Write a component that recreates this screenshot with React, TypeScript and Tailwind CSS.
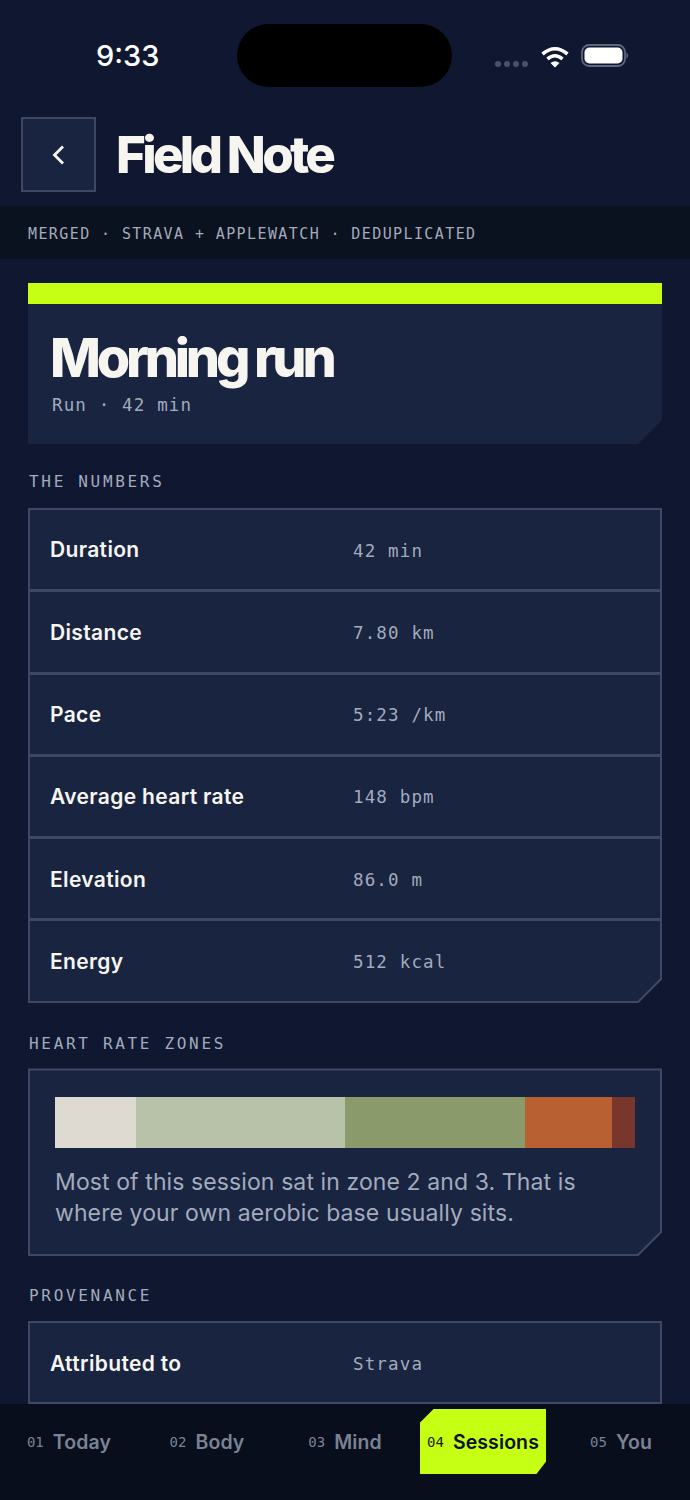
import React from 'react';

const mono = "font-['DejaVu_Sans_Mono',monospace]";
const sans = "font-['Inter',sans-serif]";

const numbers = [
  { label: 'Duration', value: '42 min' },
  { label: 'Distance', value: '7.80 km' },
  { label: 'Pace', value: '5:23 /km' },
  { label: 'Average heart rate', value: '148 bpm' },
  { label: 'Elevation', value: '86.0 m' },
  { label: 'Energy', value: '512 kcal' },
];

const tabs = [
  { num: '01', label: 'Today' },
  { num: '02', label: 'Body' },
  { num: '03', label: 'Mind' },
  { num: '04', label: 'Sessions', active: true },
  { num: '05', label: 'You' },
];

const SectionLabel: React.FC<{ children: React.ReactNode }> = ({ children }) => (
  <h2 className={`${mono} text-[16px] leading-[20px] tracking-[2.68px] pl-px text-[#a3abbd]`}>{children}</h2>
);

const Row: React.FC<{ label: string; value: string; last?: boolean }> = ({ label, value, last }) => (
  <div className={`flex items-center pl-[20px] ${last ? 'h-[79px]' : 'h-[82.3px] border-b-[3px] border-[#3e4864]'}`}>
    <div className="w-[303px] pt-[1px] text-[21px] font-semibold tracking-[0.35px] text-[#f7f5f0]">{label}</div>
    <div className={`${mono} pt-[2px] text-[17.5px] tracking-[1.15px] text-[#a3abbd]`}>{value}</div>
  </div>
);

const StatusBar: React.FC = () => (
  <div className="flex items-start h-[100px] pt-[24px] pl-[96px]">
    <div className="w-[141px] pt-[12px] text-[29px] leading-[40px] font-medium text-white">9:33</div>
    <div className="w-[215px] h-[63px] rounded-full bg-black" />
    <div className="flex items-start pl-[43px] pt-[19px]">
      <div className="flex gap-[3px] pt-[18px]">
        {[0, 1, 2, 3].map((dot) => (
          <span key={dot} className="w-[6px] h-[6px] rounded-full bg-[#4a5268]" />
        ))}
      </div>
      <svg width="30" height="22" viewBox="0 0 30 22" className="ml-[12px] mt-[3px]">
        <path d="M2.5 8 Q15 -2.5 27.5 8" fill="none" stroke="#fff" strokeWidth="3.6" />
        <path d="M7.5 13 Q15 6.5 22.5 13" fill="none" stroke="#fff" strokeWidth="3.6" />
        <path d="M10.5 17 Q15 13.5 19.5 17 L15 21.5 Z" fill="#fff" />
      </svg>
      <svg width="48" height="24" viewBox="0 0 48 24" className="ml-[11px] mt-[1px]">
        <rect x="1" y="1" width="43" height="21" rx="7" fill="none" stroke="#5f677e" strokeWidth="1.8" />
        <rect x="3.5" y="3.5" width="38" height="16" rx="5" fill="#fff" />
        <path d="M45.5 8 Q48.5 11.5 45.5 15 Z" fill="#6a7288" />
      </svg>
    </div>
  </div>
);

export default function App() {
  return (
    <div className={`${sans} relative w-[690px] h-[1500px] overflow-hidden bg-[#0f1830]`}>
      <StatusBar />

      <header className="flex items-center gap-[20px] h-[106px] pl-[21px] pt-[3px]">
        <button className="flex items-center justify-center w-[75px] h-[75px] border-2 border-[#3e4864] bg-[#182440]">
          <svg width="16" height="22" viewBox="0 0 16 22" fill="none" stroke="#f7f5f0" strokeWidth="2.8">
            <path d="M12 2.5 L3.5 11 L12 19.5" />
          </svg>
        </button>
        <h1 className="text-[51px] leading-[56px] font-extrabold tracking-[-3.7px] text-[#f7f5f0]">Field Note</h1>
      </header>

      <div className={`${mono} h-[53px] flex items-center pl-[28px] pt-[3px] bg-[#0a111f] text-[15px] tracking-[1.4px] text-[#a3abbd]`}>
        MERGED · STRAVA + APPLEWATCH · DEDUPLICATED
      </div>

      <main className="px-[28px] pt-[24px]">
        <section className="bg-[#182440] border-t-[21px] border-[#c6ff14] h-[161px] pl-[22px] pt-[24px] [clip-path:polygon(0_0,100%_0,100%_calc(100%-24px),calc(100%-24px)_100%,0_100%)]">
          <div className="text-[54px] leading-[60px] font-extrabold tracking-[-4.2px] text-[#f7f5f0]">Morning run</div>
          <div className={`${mono} text-[17.5px] leading-[26px] mt-[4px] pl-[2px] tracking-[1.15px] text-[#a3abbd]`}>Run · 42 min</div>
        </section>

        <div className="mt-[28px] mb-[16px]">
          <SectionLabel>THE NUMBERS</SectionLabel>
        </div>
        <div className="bg-[#3e4864] p-[2px] [clip-path:polygon(0_0,100%_0,100%_calc(100%-24px),calc(100%-24px)_100%,0_100%)]">
          <div className="bg-[#182440] pb-[1px] [clip-path:polygon(0_0,100%_0,100%_calc(100%-23px),calc(100%-23px)_100%,0_100%)]">
            {numbers.map((row, index) => (
              <Row key={row.label} label={row.label} value={row.value} last={index === numbers.length - 1} />
            ))}
          </div>
        </div>

        <div className="mt-[31px] mb-[14px]">
          <SectionLabel>HEART RATE ZONES</SectionLabel>
        </div>
        <div className="bg-[#3e4864] p-[2px] [clip-path:polygon(0_0,100%_0,100%_calc(100%-24px),calc(100%-24px)_100%,0_100%)]">
          <div className="bg-[#182440] h-[184px] pl-[25px] pr-[25px] pt-[27px] [clip-path:polygon(0_0,100%_0,100%_calc(100%-23px),calc(100%-23px)_100%,0_100%)]">
            <div className="flex h-[51px]">
              <div className="w-[81px] bg-[#dedad2]" />
              <div className="w-[209px] bg-[#b8c2a8]" />
              <div className="w-[180px] bg-[#8a9a6a]" />
              <div className="w-[87px] bg-[#b86032]" />
              <div className="w-[23px] bg-[#78362c]" />
            </div>
            <p className="mt-[19px] text-[23px] leading-[31px] tracking-[0.1px] text-[#a3abbd]">
              Most of this session sat in zone 2 and 3. That is where your own aerobic base usually sits.
            </p>
          </div>
        </div>

        <div className="mt-[30px] mb-[15px]">
          <SectionLabel>PROVENANCE</SectionLabel>
        </div>
        <div className="bg-[#3e4864] p-[2px]">
          <div className="bg-[#182440]">
            <Row label="Attributed to" value="Strava" last />
          </div>
        </div>
      </main>

      <nav className="absolute left-0 right-0 bottom-0 h-[96px] bg-[#080e1b] grid grid-cols-5 items-start pt-[5px]">
        {tabs.map((tab) => (
          <div key={tab.num} className="flex justify-center">
            <div
              className={`flex items-center gap-[9px] h-[65px] px-[7.5px] pt-[2px] ${
                tab.active
                  ? 'bg-[#c6ff14] [clip-path:polygon(14px_0,100%_0,100%_calc(100%-13px),calc(100%-10px)_100%,0_100%,0_14px)]'
                  : ''
              }`}
            >
              <span className={`${mono} text-[14px] ${tab.active ? 'text-[#1a2308]' : 'text-[#7a8296]'}`}>{tab.num}</span>
              <span className={`text-[19.5px] font-semibold tracking-[0.1px] ${tab.active ? 'text-[#0a111f]' : 'text-[#7a8296]'}`}>{tab.label}</span>
            </div>
          </div>
        ))}
      </nav>
    </div>
  );
}
